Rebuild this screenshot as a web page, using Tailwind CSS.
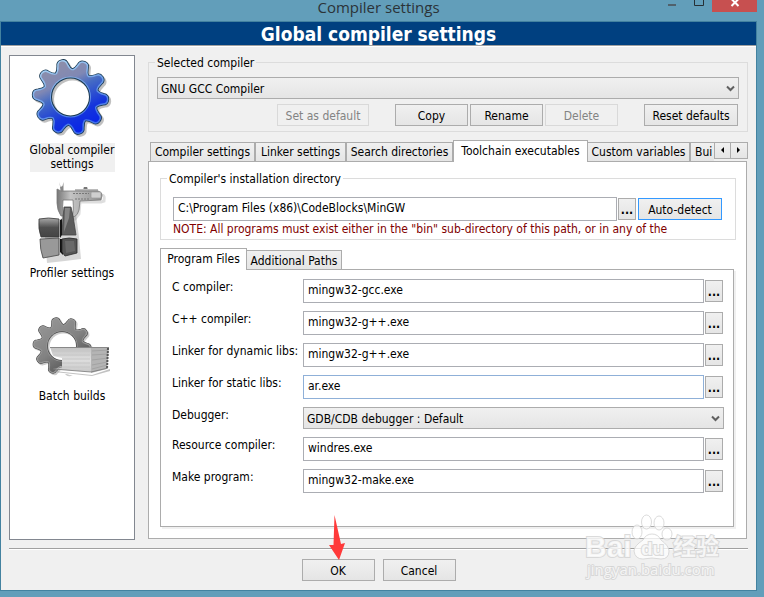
<!DOCTYPE html>
<html lang="en">
<head>
<meta charset="utf-8">
<title>Compiler settings</title>
<script src="https://cdn.jsdelivr.net/npm/@tailwindcss/browser@4"></script>
</head>
<body class="font-['DejaVu_Sans_Condensed','DejaVu_Sans',sans-serif] text-[12px] leading-[14px] text-black">
<svg class="absolute size-0" aria-hidden="true">
  <defs>
    <path id="tooth" d="M-9-26Q-6.500-28-5.500-33Q-5-38 0-38Q5-38 5.500-33Q6.500-28 9-26L0-20Z"/>
    <path id="toothInner" d="M-9-24.500Q-5-27-4-33Q-3.500-36.500 0-36.500Q3.500-36.500 4-33Q5-27 9-24.500L0-20Z"/>
    <g id="gear">
      <use href="#tooth" transform="rotate(-14)"/><use href="#tooth" transform="rotate(22)"/>
      <use href="#tooth" transform="rotate(58)"/><use href="#tooth" transform="rotate(94)"/>
      <use href="#tooth" transform="rotate(130)"/><use href="#tooth" transform="rotate(166)"/>
      <use href="#tooth" transform="rotate(202)"/><use href="#tooth" transform="rotate(238)"/>
      <use href="#tooth" transform="rotate(274)"/><use href="#tooth" transform="rotate(310)"/>
      <circle r="27"/>
    </g>
    <g id="gearCore">
      <use href="#toothInner" transform="rotate(-14)"/><use href="#toothInner" transform="rotate(22)"/>
      <use href="#toothInner" transform="rotate(58)"/><use href="#toothInner" transform="rotate(94)"/>
      <use href="#toothInner" transform="rotate(130)"/><use href="#toothInner" transform="rotate(166)"/>
      <use href="#toothInner" transform="rotate(202)"/><use href="#toothInner" transform="rotate(238)"/>
      <use href="#toothInner" transform="rotate(274)"/><use href="#toothInner" transform="rotate(310)"/>
      <circle r="25.500"/>
    </g>
    <mask id="gearOuter" maskUnits="userSpaceOnUse" x="-45" y="-45" width="90" height="90">
      <use href="#gear" fill="#fff" stroke="#fff" stroke-width="1.500"/><circle r="18.500" fill="#000"/>
    </mask>
    <mask id="gearMid" maskUnits="userSpaceOnUse" x="-45" y="-45" width="90" height="90">
      <use href="#gear" fill="#fff"/><circle r="19.500" fill="#000"/>
    </mask>
    <mask id="gearInner" maskUnits="userSpaceOnUse" x="-45" y="-45" width="90" height="90">
      <use href="#gearCore" fill="#fff"/><circle r="20.500" fill="#000"/>
    </mask>
    <linearGradient id="blue" gradientUnits="userSpaceOnUse" x1="-20" y1="-34" x2="12" y2="34">
      <stop offset="0" stop-color="#8f8fa8"/><stop offset=".3" stop-color="#8088b4"/><stop offset=".45" stop-color="#456bc4"/><stop offset=".75" stop-color="#1535dc"/><stop offset="1" stop-color="#0824e8"/>
    </linearGradient>
    <linearGradient id="blueEdge" gradientUnits="userSpaceOnUse" x1="-20" y1="-34" x2="12" y2="34">
      <stop offset="0" stop-color="#a9d2f4"/><stop offset=".5" stop-color="#6c9ce6"/><stop offset="1" stop-color="#3d6ce8"/>
    </linearGradient>
    <linearGradient id="gray" gradientUnits="userSpaceOnUse" x1="-25" y1="-34" x2="20" y2="34">
      <stop offset="0" stop-color="#969696"/><stop offset=".5" stop-color="#828282"/><stop offset="1" stop-color="#4c4c4c"/>
    </linearGradient>
    <linearGradient id="steel" x1="0" y1="0" x2="1" y2="0"><stop offset="0" stop-color="#777"/><stop offset=".3" stop-color="#c4c4c4"/><stop offset="1" stop-color="#909090"/></linearGradient>
    <linearGradient id="cubeTop" x1="0" y1="0" x2="0" y2="1"><stop offset="0" stop-color="#a8a8a8"/><stop offset=".5" stop-color="#505050"/><stop offset="1" stop-color="#444"/></linearGradient>
    <linearGradient id="paper" x1="0" y1="0" x2="0" y2="1"><stop offset="0" stop-color="#c2c2c2"/><stop offset=".5" stop-color="#dedede"/><stop offset="1" stop-color="#c9c9c9"/></linearGradient>
  </defs>
</svg>

<div class="relative flex min-h-screen flex-col bg-[#629eba] pr-[7px]">
  <header class="relative h-[21px] text-center font-['Open_Sans','Noto_Sans',sans-serif] text-[15px] leading-[14px] text-[#2b3338]">
    <h1>Compiler settings</h1>
    <div class="absolute top-0 right-0 flex items-start">
      <button aria-label="Minimize" class="h-[12px] w-[20px]"><svg class="block" width="20" height="12"><path d="M0 5h8" stroke="#50616c" stroke-width="2"/></svg></button>
      <button aria-label="Maximize" class="h-[12px] w-[24px]"><svg class="block" width="24" height="12"><path d="M6.500-2V5.500H15.500V-2" fill="none" stroke="#262f35"/></svg></button>
      <button aria-label="Close" class="h-[12px] w-[45px] bg-[#c75050]"><svg class="block" width="45" height="12"><path d="M19.500-1L26.500 6M26.500-1L19.500 6" stroke="#fff" stroke-width="2"/></svg></button>
    </div>
  </header>

  <div class="flex flex-1 flex-col border-x border-t border-[#4382a0] bg-[#f0f0f0]">
    <h2 class="h-[23px] bg-[#004080] text-center text-[19px] leading-[24px] font-bold text-white">Global compiler settings</h2>
    <div class="h-[2px] border-t border-b border-t-[#a0a0a0] border-b-white"></div>

    <main class="flex flex-1 gap-[13px] px-2 pt-2 pb-[8px]">
      <nav class="flex w-[126px] shrink-0 flex-col items-center border border-[#828790] bg-white">
        <a href="#global" class="flex flex-col items-center">
          <svg class="block" width="96" height="87" viewBox="0 0 96 87">
            <g transform="translate(46.500 41)">
              <g mask="url(#gearOuter)" transform="translate(2 2)" opacity=".3"><rect x="-45" y="-45" width="90" height="90" fill="#333"/></g>
              <g mask="url(#gearOuter)"><rect x="-45" y="-45" width="90" height="90" fill="#17364f"/></g>
              <g mask="url(#gearMid)"><rect x="-45" y="-45" width="90" height="90" fill="url(#blueEdge)"/></g>
              <g mask="url(#gearInner)"><rect x="-45" y="-45" width="90" height="90" fill="url(#blue)"/></g>
            </g>
          </svg>
          <span class="w-[85px] bg-[#f0f0f0] pb-px text-center">Global compiler settings</span>
        </a>
        <a href="#profiler" class="mt-[7px] flex flex-col items-center">
          <svg class="block" width="96" height="87" viewBox="24 179 96 87">
            <path d="M42 222l15-1 5-10 12 1 3 23 2 22-16 2-18 2z" fill="#000" opacity=".16" transform="translate(2 2)"/>
            <path d="M66 195h36q3 0 2 6l-3 1H80l-1 12-4 5h-9" fill="none" stroke="#000" stroke-opacity=".13" stroke-width="3"/>
            <path d="M57 189l4 2 37 0q4 1 4 4l-1 5-21 1-1 9q-1 5-5 7l-2-1q2-3 1-16h-10q-1 10 0 16l-2 0q-4-6-4-13z" fill="url(#steel)" stroke="#777" stroke-width=".8"/>
            <path d="M59.500 182l1 5 2-1 1-4v9h-3z" fill="#888"/>
            <path d="M84 189v-1.500h3v1.500M75 190h23" stroke="#777" fill="#777"/>
            <path d="M73 193.500h16M75 199h15" stroke="#777" stroke-dasharray="2 1"/>
            <rect x="91" y="192" width="10" height="6" rx="1" fill="#cfcfcf" stroke="#999" stroke-width=".7"/>
            <path d="M64 207h7l2 9 3 19-14 0 1-18z" fill="#5c5c5c" stroke="#444" stroke-width=".8"/>
            <path d="M65 208h5l-1 10-5 14z" fill="#858585"/>
            <path d="M39 219q9-2 20 0v18l-18 0q-3-8-2-18z" fill="url(#cubeTop)" stroke="#383838" stroke-width=".8"/>
            <path d="M60 220l2-1v16l-2 3z" fill="#161616"/>
            <path d="M40 239l19-1v17l-16 3q-3-8-3-19z" fill="#999" stroke="#444" stroke-width=".8"/>
            <path d="M60 239h3v16l-3-3z" fill="#111"/>
            <path d="M62 239q7-2 15 0v14l-12 3-3-4z" fill="#555" stroke="#282828" stroke-width=".8"/>
            <path d="M65 241h9l1 10-9 2z" fill="#696969"/>
          </svg>
          <span>Profiler settings</span>
        </a>
        <a href="#batch" class="mt-[22px] flex flex-col items-center">
          <svg class="block" width="96" height="87" viewBox="24 302 96 87">
            <g transform="translate(62 346) scale(.76)">
              <g mask="url(#gearOuter)" transform="translate(2 2)" opacity=".25"><rect x="-45" y="-45" width="90" height="90" fill="#333"/></g>
              <g mask="url(#gearOuter)"><rect x="-45" y="-45" width="90" height="90" fill="#4a4a4a"/></g>
              <g mask="url(#gearMid)"><rect x="-45" y="-45" width="90" height="90" fill="#999"/></g>
              <g mask="url(#gearInner)"><rect x="-45" y="-45" width="90" height="90" fill="url(#gray)"/></g>
            </g>
            <path d="M62 347h48v26l-17 5-31-4v-4z" fill="#fff"/>
            <path d="M54 371l38 4 18-6v2l-18 5-38-4z" fill="#999" opacity=".6"/>
            <path d="M50 347l41 0v25l-38-3 9-1v-10l-9-2z" fill="url(#paper)"/>
            <path d="M91 347h18l-2 22-16 4z" fill="#b4b4b4"/>
            <path d="M50 347.500h59" stroke="#888"/>
            <path d="M53 351h37M54 355h36M62 359h28M62 363h28M60 367h30" stroke="#c6c6c6"/>
            <path d="M92 351l16-1M92 355l16-1M92 360l16-2M92 365l15-3M92 369l15-4" stroke="#a3a3a3"/>
            <path d="M108 348l-1 21" stroke="#555" stroke-width="2" stroke-dasharray="2 1"/>
            <path d="M53 369l38 3 17-4" stroke="#777" fill="none" stroke-width=".8"/>
          </svg>
          <span>Batch builds</span>
        </a>
      </nav>

      <section class="flex min-w-0 flex-1 flex-col">
        <div role="group" aria-labelledby="sel" class="relative mt-[7px] border border-[#dcdcdc] px-2 pt-[14px] pb-[5px]">
          <label id="sel" for="compiler" class="absolute -top-[7px] left-[6px] bg-[#f0f0f0] px-[2px]">Selected compiler</label>
          <div class="relative">
            <select id="compiler" class="block h-[22px] w-full appearance-none border border-[#acacac] bg-linear-to-b from-[#f0f0f0] to-[#e5e5e5] pt-px pl-[3px]"><option>GNU GCC Compiler</option></select>
            <svg class="pointer-events-none absolute top-[8px] right-[4px]" width="9" height="7"><path d="M1 1.500L4.500 5L8 1.500" fill="none" stroke="#606060" stroke-width="2"/></svg>
          </div>
          <div class="mt-[5px] flex justify-end gap-[2px] pr-px">
            <button disabled class="mr-[24px] h-[22px] w-[92px] border border-[#d9d9d9] pt-px text-[#838383]">Set as default</button>
            <button class="h-[22px] w-[73px] border border-[#acacac] bg-linear-to-b from-[#f0f0f0] to-[#e5e5e5] pt-px">Copy</button>
            <button class="h-[22px] w-[73px] border border-[#acacac] bg-linear-to-b from-[#f0f0f0] to-[#e5e5e5] pt-px">Rename</button>
            <button disabled class="mr-[24px] h-[22px] w-[73px] border border-[#d9d9d9] pt-px text-[#838383]">Delete</button>
            <button class="h-[22px] w-[94px] border border-[#acacac] bg-linear-to-b from-[#f0f0f0] to-[#e5e5e5] pt-px whitespace-nowrap">Reset defaults</button>
          </div>
        </div>

        <div class="relative mt-[8px] flex items-end pl-[2px]">
          <div role="tablist" class="flex min-w-0 flex-1 items-end whitespace-nowrap">
            <button role="tab" class="h-[19px] w-[105px] shrink-0 border border-b-0 border-[#acacac] bg-linear-to-b from-[#f0f0f0] to-[#e5e5e5]">Compiler settings</button>
            <button role="tab" class="h-[19px] w-[91px] shrink-0 border border-b-0 border-[#acacac] bg-linear-to-b from-[#f0f0f0] to-[#e5e5e5]">Linker settings</button>
            <button role="tab" class="h-[19px] w-[107px] shrink-0 border border-b-0 border-[#acacac] bg-linear-to-b from-[#f0f0f0] to-[#e5e5e5]">Search directories</button>
            <button role="tab" aria-selected="true" class="relative z-10 -mb-px h-[22px] w-[135px] shrink-0 border border-b-0 border-[#acacac] bg-white pb-px">Toolchain executables</button>
            <button role="tab" class="h-[19px] w-[102px] shrink-0 border border-b-0 border-l-0 border-[#acacac] bg-linear-to-b from-[#f0f0f0] to-[#e5e5e5]">Custom variables</button>
            <button role="tab" aria-label="Build options" class="h-[19px] min-w-0 flex-1 overflow-hidden border border-r-0 border-b-0 border-[#acacac] bg-linear-to-b from-[#f0f0f0] to-[#e5e5e5] pl-[4px] text-left">Bui</button>
          </div>
          <div class="flex h-[19px] items-start">
            <button aria-label="Previous tabs" class="h-[17px] w-[17px] border border-[#acacac] bg-linear-to-b from-[#f0f0f0] to-[#e5e5e5]"><svg width="15" height="15" class="block"><path d="M9 4v6L6 7z"/></svg></button>
            <button aria-label="Next tabs" class="h-[17px] w-[17px] border border-l-0 border-[#acacac] bg-linear-to-b from-[#f0f0f0] to-[#e5e5e5]"><svg width="15" height="15" class="block"><path d="M6 4v6L9 7z"/></svg></button>
          </div>
        </div>

        <div class="mr-px mb-px flex flex-1 flex-col border border-[#acacac] bg-white px-[11px] pt-[16px] pb-[11px]">
          <div role="group" aria-labelledby="inst" class="relative -mr-px border border-[#dcdcdc] px-[12px] pt-[18px] pb-[3px]">
            <label id="inst" for="path" class="absolute -top-[7px] left-[6px] bg-white px-[2px]">Compiler's installation directory</label>
            <div class="flex items-center">
              <input id="path" value="C:\Program Files (x86)\CodeBlocks\MinGW" class="h-[24px] min-w-0 flex-1 border border-[#abadb3] bg-white px-[4px] pb-[2px]">
              <button aria-label="Browse" class="ml-px h-[22px] w-[18px] border border-[#acacac] bg-linear-to-b from-[#f0f0f0] to-[#e5e5e5] pt-px font-bold">...</button>
              <button class="mr-px ml-[2px] h-[22px] w-[84px] border border-[#3399ff] bg-linear-to-b from-[#f0f0f0] to-[#e5e5e5] pt-px">Auto-detect</button>
            </div>
            <p class="pt-px whitespace-nowrap text-[#800000]">NOTE: All programs must exist either in the "bin" sub-directory of this path, or in any of the</p>
          </div>

          <div role="tablist" class="mt-[8px] flex items-end">
            <button role="tab" aria-selected="true" class="relative z-10 -mb-px h-[22px] w-[87px] border border-b-0 border-[#acacac] bg-white pb-px">Program Files</button>
            <button role="tab" class="h-[19px] w-[95px] border border-b-0 border-l-0 border-[#acacac] bg-linear-to-b from-[#f0f0f0] to-[#e5e5e5] pt-px">Additional Paths</button>
          </div>
          <form class="mr-px flex flex-1 flex-col gap-2 border border-[#acacac] px-[9px] pt-[9px] pb-[32px] pl-[11px] shadow-[2px_2px_0_#f0f0f0]">
            <div class="flex"><label for="c" class="w-[131px] shrink-0 pt-px">C compiler:</label><input id="c" value="mingw32-gcc.exe" class="h-[24px] min-w-0 flex-1 border border-[#abadb3] px-[4px] pb-[2px]"><button type="button" aria-label="Browse C compiler" class="mt-px mr-px ml-px h-[22px] w-[18px] border border-[#acacac] bg-linear-to-b from-[#f0f0f0] to-[#e5e5e5] pt-px font-bold">...</button></div>
            <div class="flex"><label for="cpp" class="w-[131px] shrink-0 pt-px">C++ compiler:</label><input id="cpp" value="mingw32-g++.exe" class="h-[24px] min-w-0 flex-1 border border-[#abadb3] px-[4px] pb-[2px]"><button type="button" aria-label="Browse C++ compiler" class="mt-px mr-px ml-px h-[22px] w-[18px] border border-[#acacac] bg-linear-to-b from-[#f0f0f0] to-[#e5e5e5] pt-px font-bold">...</button></div>
            <div class="flex"><label for="dyn" class="w-[131px] shrink-0 pt-px">Linker for dynamic libs:</label><input id="dyn" value="mingw32-g++.exe" class="h-[24px] min-w-0 flex-1 border border-[#abadb3] px-[4px] pb-[2px]"><button type="button" aria-label="Browse dynamic linker" class="mt-px mr-px ml-px h-[22px] w-[18px] border border-[#acacac] bg-linear-to-b from-[#f0f0f0] to-[#e5e5e5] pt-px font-bold">...</button></div>
            <div class="flex"><label for="stat" class="w-[131px] shrink-0 pt-px">Linker for static libs:</label><input id="stat" value="ar.exe" class="h-[24px] min-w-0 flex-1 border border-[#8fb0d8] px-[4px] pb-[2px]"><button type="button" aria-label="Browse static linker" class="mt-px mr-px ml-px h-[22px] w-[18px] border border-[#acacac] bg-linear-to-b from-[#f0f0f0] to-[#e5e5e5] pt-px font-bold">...</button></div>
            <div class="flex"><label for="dbg" class="w-[131px] shrink-0 pt-px">Debugger:</label><div class="relative flex-1"><select id="dbg" class="block h-[22px] w-full appearance-none border border-[#acacac] bg-linear-to-b from-[#f0f0f0] to-[#e5e5e5] pt-px pl-[3px]"><option>GDB/CDB debugger : Default</option></select><svg class="pointer-events-none absolute top-[8px] right-[4px]" width="9" height="7"><path d="M1 1.500L4.500 5L8 1.500" fill="none" stroke="#606060" stroke-width="2"/></svg></div></div>
            <div class="flex"><label for="res" class="w-[131px] shrink-0 pt-px">Resource compiler:</label><input id="res" value="windres.exe" class="h-[24px] min-w-0 flex-1 border border-[#abadb3] px-[4px] pb-[2px]"><button type="button" aria-label="Browse resource compiler" class="mt-px mr-px ml-px h-[22px] w-[18px] border border-[#acacac] bg-linear-to-b from-[#f0f0f0] to-[#e5e5e5] pt-px font-bold">...</button></div>
            <div class="flex"><label for="mk" class="w-[131px] shrink-0 pt-px">Make program:</label><input id="mk" value="mingw32-make.exe" class="h-[24px] min-w-0 flex-1 border border-[#abadb3] px-[4px] pb-[2px]"><button type="button" aria-label="Browse make program" class="mt-px mr-px ml-px h-[22px] w-[18px] border border-[#acacac] bg-linear-to-b from-[#f0f0f0] to-[#e5e5e5] pt-px font-bold">...</button></div>
          </form>
        </div>
      </section>
    </main>

    <footer class="px-2 pb-[9px]">
      <div class="h-[2px] border-t border-b border-t-[#a0a0a0] border-b-white"></div>
      <div class="flex justify-center gap-2 pt-[9px]">
        <button class="h-[22px] w-[73px] border border-[#acacac] bg-linear-to-b from-[#f0f0f0] to-[#e5e5e5] pt-px">OK</button>
        <button class="h-[22px] w-[73px] border border-[#acacac] bg-linear-to-b from-[#f0f0f0] to-[#e5e5e5] pt-px">Cancel</button>
      </div>
    </footer>
  </div>
  <div class="h-[7px] border-t border-[#4382a0]"></div>

  <svg class="pointer-events-none absolute bottom-[37px] left-[328px]" width="18" height="46" aria-hidden="true"><path d="M6.500 1L13 30L17 29L11 46L1 31L5.500 31Z" fill="#ff3a3a"/></svg>

  <svg class="pointer-events-none absolute right-[34px] bottom-[12px]" width="150" height="74" viewBox="580 511 150 74" aria-hidden="true">
    <g fill="#fff" fill-opacity=".75" stroke="#d2d2d2" stroke-opacity=".8">
      <ellipse cx="637" cy="532" rx="5" ry="7"/><ellipse cx="646.500" cy="522" rx="5" ry="7"/><ellipse cx="659" cy="523" rx="5" ry="7"/><ellipse cx="667" cy="534" rx="5" ry="6"/>
      <path d="M652 534q6 0 9 6 8 6 8 11 0 8-8 8-9-2-18 0-8 0-9-8 0-5 9-11 3-6 9-6z"/>
      <g font-family="Liberation Sans, Noto Sans CJK SC, sans-serif" font-weight="bold" paint-order="stroke" stroke-width="2">
        <text x="585" y="557" font-size="30">Bai</text>
        <text x="641" y="555" font-size="19">du</text>
        <text x="673" y="555" font-size="23" font-family="Noto Sans CJK SC, sans-serif">经验</text>
      </g>
      <text x="587" y="575" font-size="15" font-family="Open Sans, Noto Sans, sans-serif" paint-order="stroke" stroke-width="2">jingyan.baidu.com</text>
    </g>
  </svg>
</div>
</body>
</html>
